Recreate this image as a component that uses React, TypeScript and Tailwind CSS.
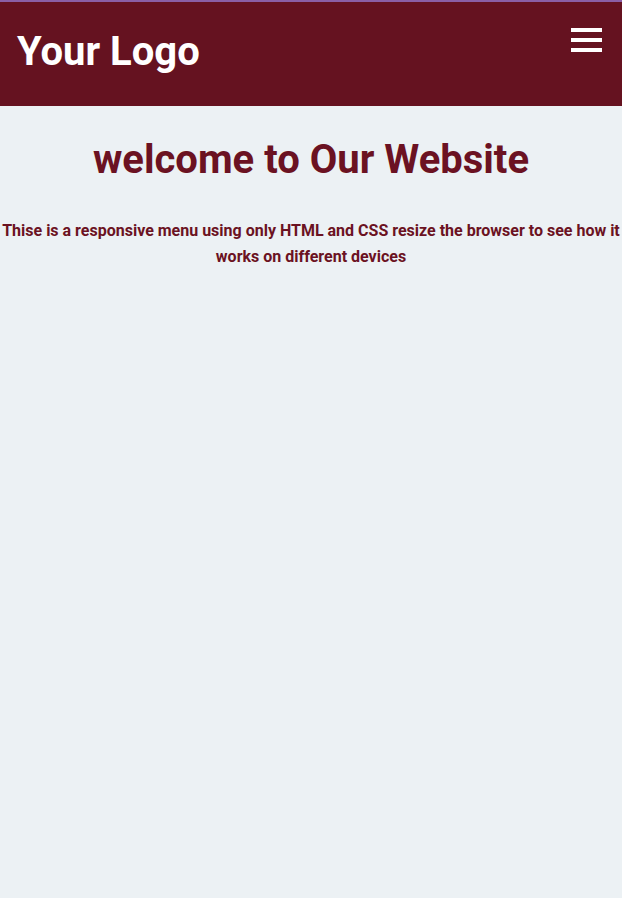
export default function App() {
  return (
    <div className="min-h-[898px] bg-[#ecf1f4] font-['Roboto',sans-serif]">
      <header className="flex items-start justify-between border-t-2 border-[#8b5fa6] bg-[#651220] h-[106px] pl-[17px] pr-5">
        <h1 className="mt-[26px] text-[40px] font-bold leading-[48px] text-white">Your Logo</h1>
        <button className="mt-[26px] flex flex-col gap-[6px]" aria-label="menu">
          <span className="block h-[4px] w-[31px] bg-white" />
          <span className="block h-[4px] w-[31px] bg-white" />
          <span className="block h-[4px] w-[31px] bg-white" />
        </button>
      </header>
      <main className="text-center text-[#6b1222]">
        <h2 className="pt-[32px] text-[40px] font-bold leading-[44px]">welcome to Our Website</h2>
        <p className="mt-[36px] text-[16px] font-bold leading-[26px]">
          Thise is a responsive menu using only HTML and CSS resize the browser to see how it works on different devices
        </p>
      </main>
    </div>
  );
}
